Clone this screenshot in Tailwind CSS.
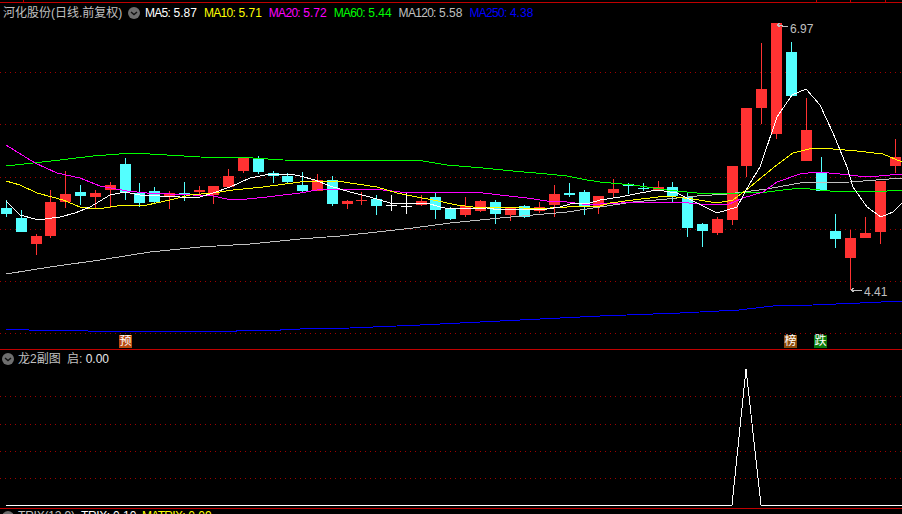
<!DOCTYPE html>
<html lang="zh-CN">
<head>
  <meta charset="UTF-8" />
  <title>河化股份</title>
  <script src="https://cdn.jsdelivr.net/npm/@tailwindcss/browser@4"></script>
</head>
<body class="bg-black overflow-hidden">
  <div class="w-[902px] h-[514px] overflow-hidden flex flex-col text-[12px] leading-[14px] text-[#c0c0c0] font-['Liberation_Sans','Noto_Sans_CJK_SC',sans-serif]">

    <!-- K line panel -->
    <div class="relative h-[350px] shrink-0 border-b border-[#c00000]">
      <svg id="kline" class="absolute inset-0" width="902" height="349" shape-rendering="crispEdges"></svg>

      <div class="relative flex items-center h-[14px] mt-[6px] pl-[3px]">
        <span class="w-[119px] whitespace-nowrap">河化股份(日线.前复权)</span>
        <svg class="ml-[6px] mr-[5px]" width="12" height="12" viewBox="0 0 12 12">
          <circle cx="6" cy="6" r="6" fill="#6e6e6e" />
          <path d="M3 5l3 2.5L9 5" fill="none" stroke="#111" stroke-width="1.4" />
        </svg>
        <div class="flex gap-[7px] whitespace-nowrap">
          <span class="text-white"><span class="tracking-[-0.7px]">MA5:</span> 5.87</span>
          <span class="text-[#ffff00]"><span class="tracking-[-0.7px]">MA10:</span> 5.71</span>
          <span class="text-[#ff00ff]"><span class="tracking-[-0.7px]">MA20:</span> 5.72</span>
          <span class="text-[#00ff00]"><span class="tracking-[-0.7px]">MA60:</span> 5.44</span>
          <span class="text-[#c0c0c0]"><span class="tracking-[-0.7px]">MA120:</span> 5.58</span>
          <span class="text-[#0000ff]"><span class="tracking-[-0.7px]">MA250:</span> 4.38</span>
        </div>
      </div>

      <span class="absolute left-[790px] top-[22px]">6.97</span>
      <span class="absolute left-[864px] top-[285px]">4.41</span>
      <span class="absolute left-[119px] top-[335px] w-[13px] h-[13px] leading-[13px] text-center text-white bg-[#b84a10]">预</span>
      <span class="absolute left-[784px] top-[335px] w-[13px] h-[13px] leading-[13px] text-center text-white bg-[#8a4a0a]">榜</span>
      <span class="absolute left-[814px] top-[335px] w-[13px] h-[13px] leading-[13px] text-center text-white bg-[#0a7a0a]">跌</span>
    </div>

    <!-- sub chart panel -->
    <div class="relative h-[159px] shrink-0 border-b border-[#c00000]">
      <svg id="sub" class="absolute inset-0" width="902" height="158" shape-rendering="crispEdges"></svg>
      <div class="relative flex items-center h-[14px] mt-[2px] pl-[2px]">
        <svg class="mr-[4px]" width="12" height="12" viewBox="0 0 12 12">
          <circle cx="6" cy="6" r="6" fill="#6e6e6e" />
          <path d="M3 5l3 2.5L9 5" fill="none" stroke="#111" stroke-width="1.4" />
        </svg>
        <span class="w-[49px] whitespace-nowrap">龙2副图</span>
        <span class="whitespace-nowrap">启: <span class="text-[#e8e8e8]">0.00</span></span>
      </div>
    </div>

    <!-- TRIX panel, cut off by the window -->
    <div class="flex h-[14px] pl-[2px] whitespace-nowrap">
      <svg class="mt-[2px] mr-[4px] shrink-0" width="12" height="12" viewBox="0 0 12 12">
        <circle cx="6" cy="6" r="6" fill="#6e6e6e" />
      </svg>
      <span class="w-[63px] tracking-[-0.2px]">TRIX(12,9)</span>
      <span class="w-[61px] text-white"><span class="tracking-[-0.4px]">TRIX:</span> 0.10</span>
      <span class="text-[#ffff00]"><span class="tracking-[-0.7px]">MATRIX:</span> 0.09</span>
    </div>
  </div>

  <script>
    const NS = "http://www.w3.org/2000/svg";
    const RED = "#ff3232", CYAN = "#54ffff", WHITE = "#ffffff";

    function add(svg, tag, attrs) {
      const el = document.createElementNS(NS, tag);
      for (const k in attrs) el.setAttribute(k, attrs[k]);
      svg.appendChild(el);
      return el;
    }

    // left, colour, high, body top, body bottom, low
    const candles = [
      [1, CYAN, 200, 208, 214, 217], [16, CYAN, 210, 218, 232, 232], [31, RED, 234, 236, 244, 255],
      [45, RED, 190, 202, 236, 238], [60, RED, 171, 194, 202, 208], [75, CYAN, 185, 192, 196, 205],
      [90, RED, 190, 193, 197, 208], [105, RED, 182, 185, 190, 208], [120, CYAN, 158, 164, 192, 200],
      [134, CYAN, 183, 193, 203, 207], [149, CYAN, 187, 191, 202, 203], [164, RED, 191, 193, 197, 209],
      [179, CYAN, 182, 193, 195, 201], [194, RED, 186, 190, 192, 195], [208, RED, 186, 186, 195, 204],
      [223, RED, 169, 176, 187, 187], [238, RED, 158, 158, 171, 173], [253, CYAN, 156, 159, 172, 174],
      [268, CYAN, 171, 173, 176, 183], [282, CYAN, 173, 176, 182, 183], [297, CYAN, 172, 185, 191, 193],
      [312, RED, 174, 180, 191, 191], [327, CYAN, 176, 180, 204, 206], [342, RED, 200, 201, 204, 209],
      [356, RED, 192, 200, 201, 205], [371, CYAN, 195, 199, 206, 215], [386, WHITE, 195, 205, 206, 211],
      [401, WHITE, 193, 206, 207, 214], [416, RED, 195, 201, 205, 206], [430, CYAN, 193, 197, 210, 219],
      [445, CYAN, 207, 209, 219, 220], [460, RED, 197, 206, 215, 217], [475, RED, 200, 201, 211, 212],
      [490, CYAN, 200, 202, 214, 224], [505, RED, 207, 207, 215, 221], [519, CYAN, 205, 206, 217, 218],
      [534, RED, 202, 207, 211, 213], [549, RED, 185, 194, 205, 217], [564, CYAN, 183, 193, 195, 197],
      [579, CYAN, 190, 192, 207, 215], [593, RED, 196, 196, 207, 214], [608, RED, 179, 189, 193, 198],
      [623, CYAN, 183, 184, 186, 194], [638, CYAN, 183, 188, 189, 191], [653, RED, 181, 187, 190, 191],
      [667, CYAN, 182, 187, 196, 202], [682, CYAN, 193, 197, 228, 237], [697, CYAN, 223, 224, 231, 247],
      [712, RED, 217, 219, 233, 235], [727, RED, 166, 166, 220, 225], [741, RED, 108, 108, 166, 177],
      [756, RED, 43, 89, 108, 124], [771, RED, 23, 23, 134, 139], [786, CYAN, 42, 52, 96, 96],
      [801, RED, 98, 130, 161, 161], [816, CYAN, 157, 172, 191, 191], [830, CYAN, 214, 231, 239, 248],
      [845, RED, 230, 238, 258, 290], [860, RED, 217, 233, 238, 238], [875, RED, 181, 181, 232, 244],
      [890, RED, 139, 157, 166, 173]
    ];

    const lines = [
      { color: "#c0c0c0", pts: "6,274 50,267 100,260 150,252 200,247 250,244 300,239 340,236 377,232 413,228 450,223 500,218 533,215 567,212 600,207 633,202 667,199 697,196 727,194 767,189 800,183 850,182 902,178" },
      { color: "#0000ff", pts: "6,329 28,329 29,330 87,330 88,331 236,331 236,330 280,330 280,329 300,329 350,328 420,325 500,321 600,316 680,313 739,310 773,306 813,305 860,303 902,301" },
      { color: "#00ff00", pts: "6,166 33,163 60,160 93,156 133,153 167,155 200,157 253,158 283,160 423,161 447,165 483,168 513,171 547,174 567,176 587,180 600,182 633,185 667,190 707,194 740,193 767,192 800,188 830,191 887,191 902,190" },
      { color: "#ff00ff", pts: "6,145 14,150 35,163 57,173 80,178 100,186 127,191 147,193 193,195 213,196 227,199 247,199 267,197 300,193 317,190 343,189 357,189 383,190 400,192 430,192 483,193 500,195 527,198 547,201 567,202 590,205 600,204 643,202 677,202 700,204 727,205 743,198 763,192 777,182 800,174 817,172 840,174 867,177 902,174" },
      { color: "#ffff00", pts: "6,181 20,185 37,193 63,200 80,207 97,209 117,206 147,205 170,200 190,195 213,193 233,190 263,187 300,182 337,181 357,184 377,187 397,193 417,197 433,200 457,205 473,207 513,207 533,209 567,207 600,206 610,203 633,200 667,196 693,199 717,203 733,200 750,187 773,168 793,153 813,148 833,149 857,151 883,154 902,162" },
      { color: "#ffffff", pts: "6,201 20,215 35,219 45,219 60,217 75,213 90,207 110,195 125,192 140,195 160,196 180,197 200,197 213,193 230,187 250,178 270,174 290,174 300,176 315,180 330,186 350,192 370,197 390,203 427,203 440,207 450,209 487,208 500,210 527,209 547,209 560,207 570,204 590,203 600,200 620,197 640,193 657,190 677,193 697,203 717,213 737,207 750,183 760,167 777,117 792,95 806,89 820,105 833,133 847,167 853,187 867,207 881,217 893,212 902,203" }
    ];

    function dots(svg, ys) {
      ys.forEach(y => add(svg, "line", { x1: 0, x2: 902, y1: y + 0.5, y2: y + 0.5, stroke: "#a00000", "stroke-dasharray": "1 4" }));
    }

    const kline = document.getElementById("kline");
    add(kline, "rect", { x: 0, y: 2, width: 902, height: 1, fill: "#c00000" });
    [23, 816, 850, 885].forEach(x => add(kline, "rect", { x: x, y: 0, width: 1, height: 2, fill: "#c00000" }));
    dots(kline, [72, 124, 177, 229, 281, 333]);

    candles.forEach(([left, color, high, top, bottom, low]) => {
      add(kline, "rect", { x: left + 5, y: high, width: 1, height: low - high, fill: color });
      add(kline, "rect", { x: left, y: top, width: 11, height: Math.max(bottom - top, 1), fill: color });
    });

    lines.forEach(l => add(kline, "polyline", { points: l.pts, fill: "none", stroke: l.color, "stroke-width": 1 }));

    // high / low arrows
    add(kline, "path", { d: "M777 25H780M777 25L788 27M777 25L780 23M777 25L780 27", stroke: "#c0c0c0", fill: "none" });
    add(kline, "path", { d: "M851 290H862M851 290L854 288M851 290L854 292", stroke: "#c0c0c0", fill: "none" });

    // offset of the sub panel in the page is 350
    const sub = document.getElementById("sub");
    dots(sub, [46, 74, 101, 128]);
    add(sub, "polyline", { points: "6,155 732,155 746,19 761,155 902,155", fill: "none", stroke: "#ffffff", "stroke-width": 1 });
  </script>
</body>
</html>
